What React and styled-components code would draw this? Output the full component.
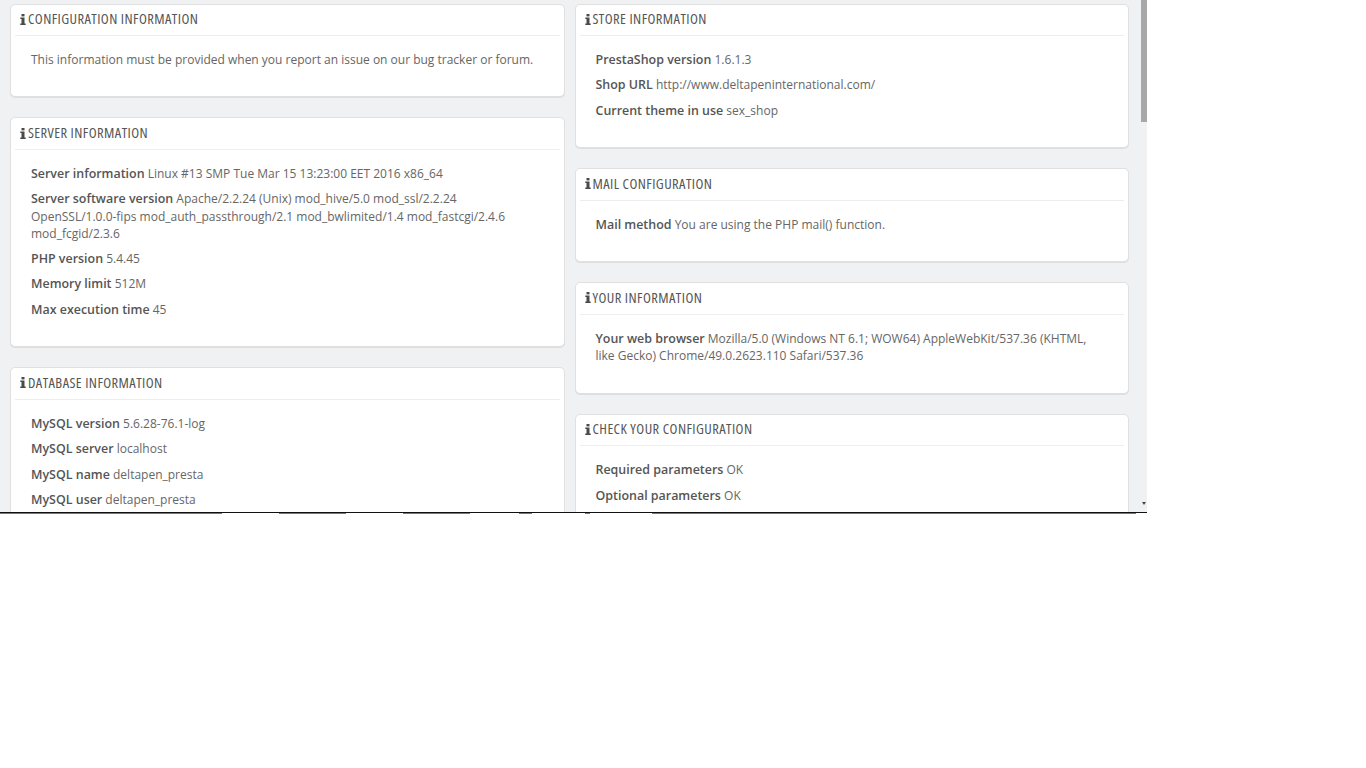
import React from "react";
import styled, { createGlobalStyle } from "styled-components";

const GlobalStyle = createGlobalStyle`
  html, body {
    margin: 0;
    padding: 0;
    background: #fff;
  }
`;

const leftPanels = [
  {
    title: "CONFIGURATION INFORMATION",
    rows: [{ value: "This information must be provided when you report an issue on our bug tracker or forum." }],
  },
  {
    title: "SERVER INFORMATION",
    bottom: 20.05,
    rows: [
      { label: "Server information", value: "Linux #13 SMP Tue Mar 15 13:23:00 EET 2016 x86_64" },
      {
        label: "Server software version",
        value:
          "Apache/2.2.24 (Unix) mod_hive/5.0 mod_ssl/2.2.24 OpenSSL/1.0.0-fips mod_auth_passthrough/2.1 mod_bwlimited/1.4 mod_fastcgi/2.4.6 mod_fcgid/2.3.6",
      },
      { label: "PHP version", value: "5.4.45" },
      { label: "Memory limit", value: "512M" },
      { label: "Max execution time", value: "45" },
    ],
  },
  {
    title: "DATABASE INFORMATION",
    rows: [
      { label: "MySQL version", value: "5.6.28-76.1-log" },
      { label: "MySQL server", value: "localhost" },
      { label: "MySQL name", value: "deltapen_presta" },
      { label: "MySQL user", value: "deltapen_presta" },
    ],
  },
];

const rightPanels = [
  {
    title: "STORE INFORMATION",
    bottom: 20.01,
    rows: [
      { label: "PrestaShop version", value: "1.6.1.3" },
      { label: "Shop URL", value: "http://www.deltapeninternational.com/" },
      { label: "Current theme in use", value: "sex_shop" },
    ],
  },
  {
    title: "MAIL CONFIGURATION",
    rows: [{ label: "Mail method", value: "You are using the PHP mail() function." }],
  },
  {
    title: "YOUR INFORMATION",
    bottom: 20.31,
    rows: [
      {
        label: "Your web browser",
        value: "Mozilla/5.0 (Windows NT 6.1; WOW64) AppleWebKit/537.36 (KHTML, like Gecko) Chrome/49.0.2623.110 Safari/537.36",
      },
    ],
  },
  {
    title: "CHECK YOUR CONFIGURATION",
    rows: [
      { label: "Required parameters", value: "OK" },
      { label: "Optional parameters", value: "OK" },
    ],
  },
];

const InfoIcon = () => (
  <svg width="6" height="11" viewBox="0 0 6 11">
    <rect x="1.5" y="0" width="3" height="2.4" fill="#4a4a4a" />
    <path d="M0.3 3.6H4.5V9.6H5.7V11H0.3V9.6H1.5V5H0.3Z" fill="#4a4a4a" />
  </svg>
);

const Panel = ({ title, rows, bottom = 19.91 }) => (
  <Card $bottom={bottom}>
    <Heading>
      <InfoIcon />
      <HeadingText>{title}</HeadingText>
    </Heading>
    <Body>
      {rows.map((row, i) => (
        <Row key={i}>
          {row.label && <Label>{row.label}</Label>} {row.value}
        </Row>
      ))}
    </Body>
  </Card>
);

const App = () => (
  <>
    <GlobalStyle />
    <Frame>
      <Columns>
        <Column>
          {leftPanels.map((p) => (
            <Panel key={p.title} {...p} />
          ))}
        </Column>
        <Column>
          {rightPanels.map((p) => (
            <Panel key={p.title} {...p} />
          ))}
        </Column>
      </Columns>
      <ScrollTrack>
        <ScrollThumb />
        <ScrollArrow />
      </ScrollTrack>
    </Frame>
    <Sliver />
  </>
);

const Frame = styled.div`
  position: relative;
  width: 1147px;
  height: 512px;
  overflow: hidden;
  background: #eff1f2;
  border-bottom: 1px solid #111;
  font-family: "Open Sans", sans-serif;
  font-size: 12px;
  line-height: 17.14px;
  color: #666;
`;

const Columns = styled.div`
  display: flex;
  gap: 10px;
  width: 1119px;
  padding: 3.5px 0 0 10px;
`;

const Column = styled.div`
  flex: 1;
  min-width: 0;
  display: flex;
  flex-direction: column;
  gap: 20px;
`;

const Card = styled.section`
  background: #fff;
  border: 1px solid #e0e0e0;
  border-radius: 5px;
  box-shadow: 0 1px 0 rgba(0, 0, 0, 0.08);
  padding: 0 4px ${(p) => p.$bottom}px;
`;

const Heading = styled.div`
  display: flex;
  align-items: center;
  gap: 2px;
  height: 29.35px;
  padding: 0 0 1px 5px;
  border-bottom: 1px solid #eee;
  color: #555;
`;

const HeadingText = styled.span`
  font-family: "Open Sans", sans-serif;
  font-size: 14.5px;
  font-weight: 400;
  font-stretch: 75%;
  letter-spacing: 0.42px;
  line-height: 28px;
`;

const Body = styled.div`
  padding: 15.25px 16px 0;
`;

const Row = styled.p`
  margin: 0 0 8.25px;
`;

const Label = styled.strong`
  font-size: 12.45px;
  font-weight: 600;
  color: #555;
`;

const ScrollTrack = styled.div`
  position: absolute;
  top: 0;
  right: 0;
  bottom: 0;
  width: 6px;
  background: #f1f1f1;
`;

const ScrollThumb = styled.div`
  height: 122px;
  background: #a8a8a8;
`;

const ScrollArrow = styled.div`
  position: absolute;
  left: 1px;
  bottom: 7px;
  border-left: 2px solid transparent;
  border-right: 2px solid transparent;
  border-top: 3px solid #444;
`;

// sliver of whatever sits below the frame's bottom line
const Sliver = styled.div`
  width: 1136px;
  height: 1px;
  background: linear-gradient(
    to right,
    #777 0 222px,
    transparent 222px 279px,
    #777 279px 346px,
    transparent 346px 403px,
    #777 403px 470px,
    transparent 470px 519px,
    #777 519px 532px,
    transparent 532px 585px,
    #777 585px 590px,
    transparent 590px 652px,
    #777 652px 100%
  );
`;

export default App;
